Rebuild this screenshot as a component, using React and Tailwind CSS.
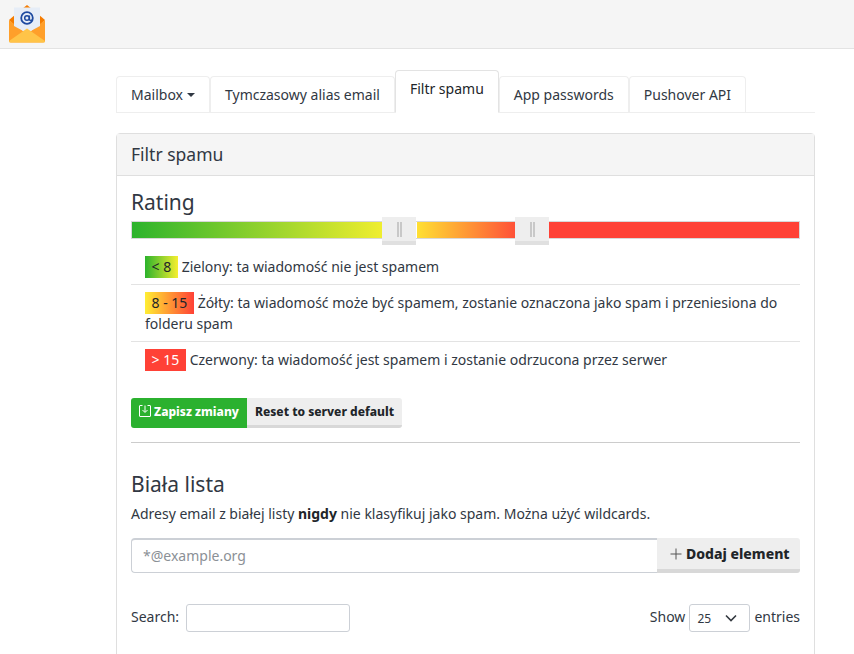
import React from "react";

function Logo() {
  return (
    <svg width="38" height="38" viewBox="0 0 38 38" className="block">
      <path d="M19 0 L24 4 H14 Z" fill="#f57c00" />
      <path d="M1 15 L8 9 V22 Z" fill="#f57c00" />
      <path d="M37 15 L30 9 V22 Z" fill="#f57c00" />
      <path d="M1 15 L19 29 L37 15 V36 Q37 37.500 35 37.500 H3 Q1 37.500 1 36 Z" fill="#ff9f2a" />
      <path d="M6 2.500 H32 V21 L19 28 L6 21 Z" fill="#e6edf7" />
      <circle cx="19" cy="13" r="5.800" fill="none" stroke="#1e4aa0" strokeWidth="1.800" />
      <circle cx="19" cy="13" r="2.300" fill="none" stroke="#1e4aa0" strokeWidth="1.500" />
      <path d="M21.400 10.500 V14.500 Q22 16 24 15" fill="none" stroke="#1e4aa0" strokeWidth="1.400" />
      <path d="M1 36 Q1 37.500 3 37.500 H35 Q37 37.500 37 36 L19 23.500 Z" fill="#ffc448" />
    </svg>
  );
}

function Tab({ children, active }) {
  return (
    <div
      className={
        active
          ? "h-[43px] px-[14px] pb-[6px] flex items-center border border-[#e3e3e3] border-b-white bg-white rounded-t-[4px] mb-[-1px] text-[#212529]"
          : "h-[36px] px-[14px] flex items-center border border-[#eeeeee] border-b-0 bg-white rounded-t-[4px] text-[#313843]"
      }
    >
      {children}
    </div>
  );
}

function Handle({ className }) {
  return (
    <div
      className={
        "absolute top-[-5px] w-[34px] h-[28px] bg-[#eeeeee] border-b-[4px] border-[#e0e0e0] flex items-center justify-center gap-[1px] " +
        className
      }
    >
      <span className="w-[2px] h-[15px] bg-[#c8c8c8]" />
      <span className="w-[2px] h-[15px] bg-[#c8c8c8]" />
    </div>
  );
}

export default function App() {
  return (
    <div
      className="h-[654px] overflow-hidden bg-white text-[14px] leading-[21px] text-[#313843]"
      style={{ fontFamily: '"Noto Sans", "Open Sans", sans-serif' }}
    >
      <div className="h-[49px] bg-[#f5f5f5] border-b border-[#e3e3e3] pl-[8px] pt-[5px]">
        <Logo />
      </div>

      <div className="ml-[116px] w-[699px] pt-[27px]">
        <div className="flex items-end h-[37px] border-b border-[#eeeeee]">
          <Tab>
            Mailbox
            <span className="ml-[4px] mt-[1px] w-0 h-0 border-x-[4px] border-x-transparent border-t-[4px] border-t-[#313843]" />
          </Tab>
          <Tab>Tymczasowy alias email</Tab>
          <Tab active>Filtr spamu</Tab>
          <Tab>App passwords</Tab>
          <Tab>Pushover API</Tab>
        </div>

        <div className="mt-[20px] border border-[#dfdfdf] rounded-t-[4px] h-[600px]">
          <div className="h-[42px] bg-[#f5f5f5] border-b border-[#dfdfdf] px-[14px] flex items-center text-[17.500px]">
            Filtr spamu
          </div>
          <div className="px-[14px] pt-[11px]">
            <h3 className="text-[21px] leading-[30px] text-[#313843]">Rating</h3>

            <div className="relative mt-[4px] h-[18px] border border-[#d8d8d8] flex">
              <div className="w-[251px] bg-linear-to-r/srgb from-[#2cb32c] to-[#f0ee2f]" />
              <div className="w-[133px] pl-[34px]">
                <div className="h-full bg-linear-to-r/srgb from-[#ffe033] to-[#ff5038]" />
              </div>
              <div className="flex-1 bg-[#ff4136]" />
              <Handle className="left-[250px]" />
              <Handle className="left-[383px]" />
            </div>

            <div className="mt-[7px]">
              <div className="px-[14px] pt-[10px] pb-[7px] border-b border-[#e3e3e3] h-[39px]">
                <span className="inline-block h-[22px] my-[-1px] px-[6.500px] mr-[4px] bg-linear-to-r/srgb from-[#2cb32c] to-[#f6ef30] text-[#212529]">
                  &lt; 8
                </span>
                Zielony: ta wiadomość nie jest spamem
              </div>
              <div className="px-[14px] pt-[7px] pb-[7px] border-b border-[#e3e3e3] h-[57px]">
                <span className="inline-block h-[22px] my-[-1px] px-[6.500px] mr-[4px] bg-linear-to-r/srgb from-[#ffee33] to-[#ff4136] text-[#212529]">
                  8 - 15
                </span>
                Żółty: ta wiadomość może być spamem, zostanie oznaczona jako spam i przeniesiona do folderu spam
              </div>
              <div className="px-[14px] pt-[7px] h-[39px]">
                <span className="inline-block h-[22px] my-[-1px] px-[6.500px] mr-[4px] bg-[#ff4136] text-white">&gt; 15</span>
                Czerwony: ta wiadomość jest spamem i zostanie odrzucona przez serwer
              </div>
            </div>

            <div className="mt-[17px] flex h-[30px] text-[12px] font-extrabold">
              <div className="w-[116px] h-full bg-[#2bb12f] text-white rounded-l-[3px] flex items-center pl-[8px] pb-[4px] gap-[3px]">
                <svg width="12" height="12" viewBox="0 0 12 12" fill="none" stroke="white" strokeWidth="1">
                  <path d="M3.500 .5 H1 Q.5 .5 .5 1 V11 Q.5 11.500 1 11.500 H11 Q11.500 11.500 11.500 11 V1 Q11.500 .5 11 .5 H8.500" />
                  <path d="M6 .5 V7 M3.500 5 L6 7.500 L8.500 5" />
                </svg>
                Zapisz zmiany
              </div>
              <div className="w-[155px] h-full bg-[#eeeeee] border-b-[3px] border-[#d8d8d8] rounded-r-[3px] text-[#212529] flex items-center justify-center pb-[1px]">
                Reset to server default
              </div>
            </div>

            <div className="mt-[14px] border-t border-[#cccccc]" />

            <h3 className="mt-[26px] text-[21px] leading-[30px] text-[#313843]">Biała lista</h3>
            <p className="mt-[4px]">
              Adresy email z białej listy <b className="text-[#212529]">nigdy</b> nie klasyfikuj jako spam. Można użyć wildcards.
            </p>

            <div className="mt-[14px] flex h-[35px]">
              <div className="flex-1 border border-[#ccd0d6] border-t-[2px] border-r-0 rounded-l-[4px] px-[11px] pb-[2px] flex items-center text-[#8b9096]">
                *@example.org
              </div>
              <div className="w-[143px] bg-[#eeeeee] border-b-[4px] border-[#d8d8d8] rounded-r-[3px] flex items-center pl-[13px] gap-[4px] font-extrabold text-[#212529]">
                <svg width="12" height="12" viewBox="0 0 12 12" stroke="#555" strokeWidth="1">
                  <path d="M6 .5 V11.500 M.5 6 H11.500" />
                </svg>
                Dodaj element
              </div>
            </div>

            <div className="mt-[31px] flex items-center justify-between h-[28px]">
              <div className="flex items-center gap-[7px]">
                <span className="pb-[3px]">Search:</span>
                <div className="w-[164px] h-[28px] border border-[#ccd0d6] rounded-[3px]" />
              </div>
              <div className="flex items-center gap-[4px]">
                <span className="pb-[3px]">Show</span>
                <div className="w-[61px] h-[28px] border border-[#ccd0d6] rounded-[3px] flex items-center justify-between pl-[7px] pr-[12px] text-[12px]">
                  25
                  <svg width="12" height="8" viewBox="0 0 12 8" fill="none" stroke="#343a40" strokeWidth="1.600">
                    <path d="M1 1.500 L6 6.500 L11 1.500" />
                  </svg>
                </div>
                <span className="pb-[3px]">entries</span>
              </div>
            </div>
          </div>
        </div>
      </div>
    </div>
  );
}
